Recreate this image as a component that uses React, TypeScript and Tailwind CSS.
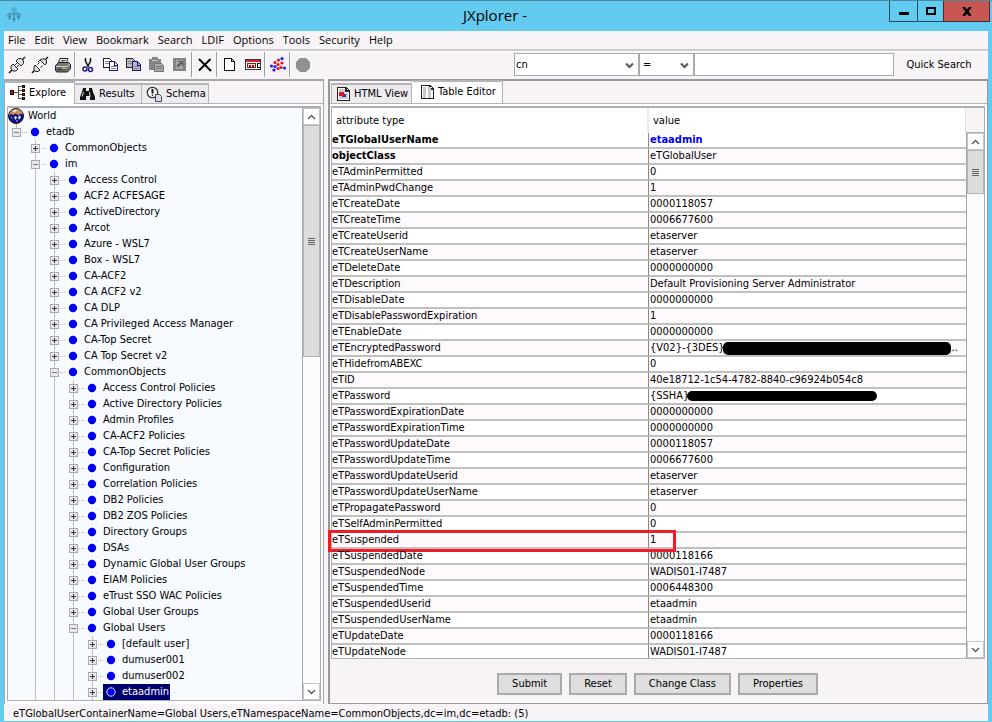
import { ReactNode, useState } from "react";
import clsx from "clsx";

type TreeNode = [depth: number, label: string, open?: boolean];

const tree: TreeNode[] = [
  [0, "etadb", true],
  [1, "CommonObjects"],
  [1, "im", true],
  [2, "Access Control"],
  [2, "ACF2 ACFESAGE"],
  [2, "ActiveDirectory"],
  [2, "Arcot"],
  [2, "Azure - WSL7"],
  [2, "Box - WSL7"],
  [2, "CA-ACF2"],
  [2, "CA ACF2 v2"],
  [2, "CA DLP"],
  [2, "CA Privileged Access Manager"],
  [2, "CA-Top Secret"],
  [2, "CA Top Secret v2"],
  [2, "CommonObjects", true],
  [3, "Access Control Policies"],
  [3, "Active Directory Policies"],
  [3, "Admin Profiles"],
  [3, "CA-ACF2 Policies"],
  [3, "CA-Top Secret Policies"],
  [3, "Configuration"],
  [3, "Correlation Policies"],
  [3, "DB2 Policies"],
  [3, "DB2 ZOS Policies"],
  [3, "Directory Groups"],
  [3, "DSAs"],
  [3, "Dynamic Global User Groups"],
  [3, "EIAM Policies"],
  [3, "eTrust SSO WAC Policies"],
  [3, "Global User Groups"],
  [3, "Global Users", true],
  [4, "[default user]"],
  [4, "dumuser001"],
  [4, "dumuser002"],
  [4, "etaadmin"],
];

const attributes: [string, string][] = [
  ["eTGlobalUserName", "etaadmin"],
  ["objectClass", "eTGlobalUser"],
  ["eTAdminPermitted", "0"],
  ["eTAdminPwdChange", "1"],
  ["eTCreateDate", "0000118057"],
  ["eTCreateTime", "0006677600"],
  ["eTCreateUserid", "etaserver"],
  ["eTCreateUserName", "etaserver"],
  ["eTDeleteDate", "0000000000"],
  ["eTDescription", "Default Provisioning Server Administrator"],
  ["eTDisableDate", "0000000000"],
  ["eTDisablePasswordExpiration", "1"],
  ["eTEnableDate", "0000000000"],
  ["eTEncryptedPassword", "{V02}-{3DES}"],
  ["eTHidefromABEXC", "0"],
  ["eTID", "40e18712-1c54-4782-8840-c96924b054c8"],
  ["eTPassword", "{SSHA}"],
  ["eTPasswordExpirationDate", "0000000000"],
  ["eTPasswordExpirationTime", "0000000000"],
  ["eTPasswordUpdateDate", "0000118057"],
  ["eTPasswordUpdateTime", "0006677600"],
  ["eTPasswordUpdateUserid", "etaserver"],
  ["eTPasswordUpdateUserName", "etaserver"],
  ["eTPropagatePassword", "0"],
  ["eTSelfAdminPermitted", "0"],
  ["eTSuspended", "1"],
  ["eTSuspendedDate", "0000118166"],
  ["eTSuspendedNode", "WADIS01-I7487"],
  ["eTSuspendedTime", "0006448300"],
  ["eTSuspendedUserid", "etaadmin"],
  ["eTSuspendedUserName", "etaadmin"],
  ["eTUpdateDate", "0000118166"],
  ["eTUpdateNode", "WADIS01-I7487"],
];

const menus = ["File", "Edit", "View", "Bookmark", "Search", "LDIF", "Options", "Tools", "Security", "Help"];

function Plug({ apart }: { apart?: boolean }) {
  return (
    <svg width="18" height="18" viewBox="0 0 18 18" fill="none" stroke="#222">
      <path d="M1 17l4-4M13 5l4-4" strokeWidth="1.6" />
      {apart ? (
        <>
          <path d="M4 9l5 5-2 1.500H4.500L3 13.500V11zM6.500 8.500l2-2M9.500 11.500l2-2" fill="#ddd" />
          <path d="M9 4l5 5 1.500-2V4.500L13.500 3H11zM7 6l2-2" fill="#ddd" />
        </>
      ) : (
        <>
          <path d="M5 8l5 5-2 2H5l-2-2v-3zM8 5l5 5 2.500-2.500V5L13 2.500h-2.500z" fill="#ddd" />
          <path d="M6.500 9.500l3-3M8.500 11.500l3-3" />
        </>
      )}
    </svg>
  );
}

function Printer() {
  return (
    <svg width="18" height="18" viewBox="0 0 18 18">
      <path d="M6 2.500h8l-2 5H4z" fill="#eee" stroke="#222" />
      <path d="M7.500 4.500h4M6.500 6h4" stroke="#555" />
      <path d="M1.500 9.500l3-3h10l2 2v4l-3 3.500h-11l-1-2z" fill="#777" stroke="#222" />
      <path d="M2 10.500h11l3-2" stroke="#ccc" fill="none" />
      <path d="M3 13.500h9" stroke="#444" strokeWidth="2" />
      <path d="M8 12.500h4" stroke="#c8c020" strokeWidth="1.500" />
    </svg>
  );
}

function Scissors() {
  return (
    <svg width="14" height="16" viewBox="0 0 14 16" fill="none">
      <path d="M4.500 1v3l3 6M9.500 1v3l-3 6" stroke="#111" strokeWidth="1.500" />
      <circle cx="4" cy="12" r="2" stroke="#17178a" strokeWidth="1.400" />
      <circle cx="9.500" cy="12.500" r="2" stroke="#17178a" strokeWidth="1.400" />
    </svg>
  );
}

function Copy({ filled }: { filled?: boolean }) {
  return (
    <svg width="17" height="16" viewBox="0 0 17 16" shapeRendering="crispEdges">
      <path d="M1.500 1.500h6l2 2v7h-8z" fill={filled ? "#bbb" : "#fff"} stroke="#222" />
      <path d="M3 4.500h4M3 6.500h4" stroke="#888" />
      <path d="M7.500 4.500h5l3 3v6h-8z" fill={filled ? "#bbb" : "#fff"} stroke="#17178a" />
      <path d="M12.500 5v3h3" fill="none" stroke="#17178a" />
      <path d="M9 9.500h5M9 11.500h5" stroke="#888" />
    </svg>
  );
}

function Paste() {
  return (
    <svg width="17" height="17" viewBox="0 0 17 17" shapeRendering="crispEdges">
      <path d="M1 3h3V1h6v2h3v11H1z" fill="#858585" />
      <path d="M4 4.500h6" stroke="#c4c4c4" />
      <path d="M6.500 7.500h7l2 2v6h-9z" fill="#a8a8a8" stroke="#777" />
      <path d="M8 10.500h6M8 12.500h6" stroke="#777" />
    </svg>
  );
}

function PasteAlias() {
  return (
    <svg width="15" height="15" viewBox="0 0 15 15" shapeRendering="crispEdges">
      <path d="M1 1h13v13H1z" fill="#848484" />
      <path d="M4 3h7v9H4z" fill="#a6a6a6" />
      <path d="M5 10l4-4M6 4.500h4.500V9" stroke="#5c5c5c" fill="none" strokeWidth="1.500" />
    </svg>
  );
}

function Rename() {
  return (
    <svg width="18" height="14" viewBox="0 0 18 14" shapeRendering="crispEdges">
      <path d="M1.500 1.500h15v10h-15z" fill="#fff" stroke="#333" />
      <path d="M2 3h14" stroke="#d22" strokeWidth="2" />
      <path d="M3.500 5.500h8v4h-8z" fill="#f6e4e4" stroke="#722" />
      <path d="M5 7.500h2M8 7.500h2" stroke="#b00" strokeWidth="2" />
      <path d="M13.500 5v5M12.500 5.500h3M12.500 9.500h3" stroke="#111" />
    </svg>
  );
}

function Refresh() {
  return (
    <svg width="18" height="17" viewBox="0 0 18 17">
      <g fill="#f01020">
        <circle cx="6" cy="6.500" r="1.600" /><circle cx="9.500" cy="4" r="1.600" /><circle cx="9" cy="8.500" r="1.600" />
        <circle cx="12" cy="11.500" r="1.600" /><circle cx="9" cy="12.500" r="1.600" /><circle cx="13" cy="7" r="1.600" />
      </g>
      <g fill="#1a20ff">
        <circle cx="13" cy="2.700" r="1.600" /><circle cx="2.500" cy="10" r="1.600" /><circle cx="5" cy="14" r="1.600" />
        <circle cx="6" cy="10.500" r="1.600" /><circle cx="15.500" cy="12" r="1.600" />
      </g>
    </svg>
  );
}

function ToolButton({ label, children }: { label: string; children: ReactNode }) {
  return (
    <button type="button" aria-label={label} className="flex h-6 w-[23px] items-center justify-center">
      {children}
    </button>
  );
}

function Separator() {
  return <span className="h-[25px] w-[2px] border-l border-[#9c9c9f] bg-white" />;
}

function ChevronIcon() {
  return (
    <svg className="pointer-events-none absolute right-[5px] top-[9px]" width="9" height="7" viewBox="0 0 9 7">
      <path d="M1 1.500l3.500 3.500L8 1.500" fill="none" stroke="#555" strokeWidth="2" />
    </svg>
  );
}

function Toolbar() {
  return (
    <div className="flex h-7 items-center border-t border-white pb-[2px] pl-px">
      <ToolButton label="Connect"><Plug /></ToolButton>
      <ToolButton label="Disconnect"><Plug apart /></ToolButton>
      <ToolButton label="Print"><Printer /></ToolButton>
      <Separator />
      <ToolButton label="Cut"><Scissors /></ToolButton>
      <ToolButton label="Copy"><Copy /></ToolButton>
      <ToolButton label="Copy DN"><Copy filled /></ToolButton>
      <ToolButton label="Paste"><Paste /></ToolButton>
      <ToolButton label="Paste alias"><PasteAlias /></ToolButton>
      <Separator />
      <ToolButton label="Delete">
        <svg width="14" height="14" viewBox="0 0 14 14" stroke="#000" strokeWidth="2">
          <path d="M1 1l12 12M12.500 1L1 12.500" />
        </svg>
      </ToolButton>
      <Separator />
      <ToolButton label="New">
        <svg width="13" height="15" viewBox="0 0 13 15" shapeRendering="crispEdges" fill="#fff" stroke="#111">
          <path d="M1.500 1.500h7l3 3v9h-10zM8.500 1.500v3h3" />
        </svg>
      </ToolButton>
      <ToolButton label="Rename"><Rename /></ToolButton>
      <Separator />
      <ToolButton label="Refresh"><Refresh /></ToolButton>
      <Separator />
      <ToolButton label="Stop">
        <svg width="14" height="14" viewBox="0 0 14 14" fill="#909090">
          <path d="M4 0h6l4 4v6l-4 4H4l-4-4V4z" />
        </svg>
      </ToolButton>
      <div className="ml-auto flex items-center">
        <div className="relative">
          <select aria-label="Search attribute" className="h-[23px] w-[125px] appearance-none border border-[#a9a9b2] bg-white pl-px outline-none">
            <option>cn</option>
          </select>
          <ChevronIcon />
        </div>
        <div className="relative">
          <select aria-label="Search operator" className="h-[23px] w-[55px] appearance-none border border-[#a9a9b2] bg-white pl-[3px] outline-none">
            <option>=</option>
          </select>
          <ChevronIcon />
        </div>
        <input aria-label="Search value" className="h-[23px] w-[200px] border border-[#a9a9b2] bg-white px-1 outline-none" />
        <button type="button" className="w-[94px] pr-1">Quick Search</button>
      </div>
    </div>
  );
}

interface TabProps {
  active: boolean;
  onClick: () => void;
  icon: ReactNode;
  className?: string;
  children: ReactNode;
}

function Tab({ active, onClick, icon, className, children }: TabProps) {
  return (
    <button
      type="button"
      role="tab"
      aria-selected={active}
      onClick={onClick}
      className={clsx(
        "flex items-center gap-[3px] whitespace-nowrap border-r border-t-2 border-[#b4b4b8] pl-1",
        active ? "h-[23px] bg-white pb-[2px]" : "h-[20px] bg-[#eeebee]",
        className,
      )}
    >
      {icon}
      {children}
    </button>
  );
}

function ExploreIcon() {
  return (
    <svg width="17" height="16" viewBox="0 0 17 16" shapeRendering="crispEdges">
      <path d="M5 7.500h4M9.500 1v13M9 1.500h5M9 5.500h5M9 9.500h5M9 13.500h5" stroke="#555" fill="none" />
      <path d="M1 5h4v5H1zM13 0h3v3h-3zM13 4h3v3h-3zM13 8h3v3h-3zM13 12h3v3h-3z" fill="#111" />
      <path d="M2 6h2v3H2zM14 1h1v1h-1zM14 5h1v1h-1zM14 9h1v1h-1zM14 13h1v1h-1z" fill="#e00" />
    </svg>
  );
}

function BinocularsIcon() {
  return (
    <svg width="17" height="14" viewBox="0 0 17 14">
      <path d="M4 1h3v3h3V1h3l1 4 2 5v3h-5V9H7v4H1v-3l2-5z" fill="#111" />
      <path d="M4.500 5L3 9.500M10.500 5l.500 5" stroke="#ddd" />
    </svg>
  );
}

function SchemaIcon() {
  return (
    <svg width="17" height="17" viewBox="0 0 17 17" fill="none">
      <circle cx="6.500" cy="6.500" r="5.200" fill="#fff" stroke="#333" strokeWidth="1.300" />
      <path d="M6.500 3v4.500" stroke="#111" strokeWidth="2" />
      <path d="M6.500 8.500v1.500M10 10l4 5" stroke="#333" strokeWidth="1.500" />
      <path d="M9.500 8.500h4l2 2v5h-6z" fill="#dde" stroke="#445" />
    </svg>
  );
}

function PageIcon({ html }: { html?: boolean }) {
  return (
    <svg width="15" height="16" viewBox="0 0 15 16" shapeRendering="crispEdges">
      <path d="M1.500 1.500h9l3 3v10h-12z" fill="#fff" stroke="#222" />
      <path d="M10 1v4h4" fill="none" stroke="#222" strokeWidth="2" />
      {html ? (
        <>
          <path d="M3 3h6v10H3zM9 7h3v6H9z" fill="#ccc" />
          <path d="M6 8h4v3H6z" fill="#2233dd" />
          <path d="M3 6h5v4H3z" fill="#dd1122" />
        </>
      ) : (
        <path d="M3 3h3v11H3zM8 3h3v11H8z" fill="#c9c9c9" />
      )}
    </svg>
  );
}

function Arrow({ up }: { up?: boolean }) {
  return (
    <svg width="9" height="6" viewBox="0 0 9 6" fill="none" stroke="#555">
      <path d={up ? "M1 5l3.500-3.500L8 5" : "M1 1l3.500 3.500L8 1"} strokeWidth="1.300" />
    </svg>
  );
}

function ScrollBar({ thumb }: { thumb: string }) {
  return (
    <div className="flex w-[18px] shrink-0 flex-col border-l border-[#a6a6aa] bg-[#fcfcfc]">
      <button type="button" aria-label="Scroll up" className="flex h-[17px] shrink-0 items-center justify-center border border-[#c6c6c9] bg-white">
        <Arrow up />
      </button>
      <div className={clsx("flex flex-col items-center justify-center gap-px border border-[#b4b4b6] bg-[#dcdcdc]", thumb)}>
        <span className="h-px w-[7px] bg-[#666]" />
        <span className="h-px w-[7px] bg-[#666]" />
        <span className="h-px w-[7px] bg-[#666]" />
        <span className="h-px w-[7px] bg-[#666]" />
      </div>
      <button type="button" aria-label="Scroll down" className="mt-auto flex h-[17px] shrink-0 items-center justify-center border border-[#c6c6c9] bg-white">
        <Arrow />
      </button>
    </div>
  );
}

function Globe() {
  return (
    <svg width="16" height="16" viewBox="0 0 16 16">
      <circle cx="8" cy="8" r="7.500" fill="#10107a" stroke="#1a1030" />
      <path d="M1 7C2 3 5 .800 8.500 1c3 0 5.500 2 6.500 5l-3 0-1.500 1.500L8 5.500 5 7 3.500 6z" fill="#c98e56" />
      <path d="M4 3l3-1.500 2.500 1-3 2z" fill="#f3dcbc" />
      <path d="M6 9l2-1 1 1.500L7.500 12zM11 7.500l2 1-1.500 3-1.500-1zM8 12l2 1-1 1z" fill="#eef" />
      <path d="M3 8l1.500 3" stroke="#48c" />
    </svg>
  );
}

function TreeRow({ node, selected, onSelect }: { node: TreeNode; selected: boolean; onSelect: () => void }) {
  const [depth, label, open] = node;
  return (
    <li role="treeitem" aria-selected={selected} className="flex h-4">
      {Array.from({ length: depth }, (_, i) => (
        <span key={i} className="w-[19px] shrink-0 pl-2">
          {i > 0 && <span className="block h-full w-px bg-[#bdbdc2]" />}
        </span>
      ))}
      <svg width="19" height="16" viewBox="0 0 19 16" className="shrink-0" shapeRendering="crispEdges">
        <path d={depth === 0 ? "M8.500 0v4" : "M8.500 0v16"} stroke="#bdbdc2" />
        <path d="M4.500 4.500h8v8h-8z" fill="#ece9ee" stroke="#a9a9ad" />
        <path d={open ? "M6 8.500h5" : "M6 8.500h5M8.500 6v5"} stroke={open ? "#777" : "#333"} />
        <path d="M14 8.500h5" stroke="#bbb" strokeDasharray="1 1" />
      </svg>
      <button
        type="button"
        onClick={onSelect}
        className={clsx("flex items-center gap-[6px] pl-[3px] pr-px", selected && "bg-[#00006c] text-white")}
      >
        <svg width="10" height="10" viewBox="0 0 10 10">
          <circle cx="5" cy="5" r="4.200" fill="#0000fa" stroke={selected ? "#dde" : "none"} />
        </svg>
        <span className="whitespace-nowrap">{label}</span>
      </button>
    </li>
  );
}

function Explorer() {
  const [tab, setTab] = useState("explore");
  const [selected, setSelected] = useState(tree.length - 1);

  return (
    <section className="flex w-[320px] shrink-0 flex-col border-l border-r border-t-2 border-[#a6a6aa]">
      <div role="tablist" className="flex h-[23px] items-end">
        <Tab active={tab === "explore"} onClick={() => setTab("explore")} icon={<ExploreIcon />} className="w-[70px]">
          Explore
        </Tab>
        <div className="flex h-full flex-1 items-end border-b border-[#b4b4b8]">
          <Tab active={tab === "results"} onClick={() => setTab("results")} icon={<BinocularsIcon />} className="w-[67px]">
            Results
          </Tab>
          <Tab active={tab === "schema"} onClick={() => setTab("schema")} icon={<SchemaIcon />} className="w-[67px]">
            Schema
          </Tab>
        </div>
      </div>
      <div className="flex flex-1 bg-white px-[2px] pb-[3px] pt-[2px]">
        <div className="flex flex-1 border border-t-2 border-[#aeaeb8] bg-[#f7faff]">
          <ul role="tree" aria-label="Directory" className="flex-1">
            <li className="flex h-4 items-center gap-1">
              <Globe />
              World
            </li>
            {tree.map((node, i) => (
              <TreeRow key={i} node={node} selected={selected === i} onSelect={() => setSelected(i)} />
            ))}
          </ul>
          <ScrollBar thumb="h-[232px]" />
        </div>
      </div>
    </section>
  );
}

function Value({ name, value }: { name: string; value: string }) {
  if (name === "eTEncryptedPassword") {
    return (
      <>
        {value}
        <span className="-ml-[2px] h-[13px] w-[228px] rounded-[5px] bg-black" />
        <span className="pl-px">..</span>
      </>
    );
  }
  if (name === "eTPassword") {
    return (
      <>
        {value}
        <span className="-ml-[2px] h-[10px] w-[190px] rounded-[5px] bg-black" />
      </>
    );
  }
  return <>{value}</>;
}

function AttributeTable() {
  return (
    <table className="w-full table-fixed border-separate border-spacing-0 leading-3">
      <thead>
        <tr className="h-[25px]">
          <th className="border-r-2 border-[#ece8ec] bg-white p-0 pl-1 text-left font-normal">attribute type</th>
          <th className="border-r border-[#e4e0e4] bg-white p-0 pl-1 text-left font-normal">value</th>
        </tr>
      </thead>
      <tbody>
        {attributes.map(([name, value], i) => (
          <tr key={name} className={i % 2 ? "bg-[#fdf9fd]" : "bg-white"}>
            <td className={clsx("border-b-2 border-r border-b-[#c0c0c0] border-r-[#88888c] p-0", i < 2 && "font-bold")}>
              <div className="relative flex h-[14px] items-center">
                {name}
                {name === "eTSuspended" && (
                  <span className="absolute -left-[4px] -top-[3px] h-[22px] w-[calc(100%+32px)] border-[3px] border-[#ee1c25]" />
                )}
              </div>
            </td>
            <td className={clsx("border-b-2 border-[#c0c0c0] p-0", i === 0 && "font-bold text-[#0000ee]")}>
              <div className="flex h-[14px] items-center whitespace-nowrap pl-px">
                <Value name={name} value={value} />
              </div>
            </td>
          </tr>
        ))}
      </tbody>
    </table>
  );
}

function ActionButton({ children }: { children: ReactNode }) {
  return (
    <button type="button" className="h-[22px] border-2 border-[#a9a9ac] bg-[#dedede] px-[13px] text-black">
      {children}
    </button>
  );
}

function Editor() {
  const [tab, setTab] = useState("table");

  return (
    <section className="flex min-w-0 flex-1 flex-col border-b border-l-2 border-r border-t-2 border-[#98989c]">
      <div role="tablist" className="flex h-[23px] items-end border-b border-[#b4b4b8] pl-px">
        <Tab active={tab === "html"} onClick={() => setTab("html")} icon={<PageIcon html />} className="w-[81px] border-l">
          HTML View
        </Tab>
        <Tab active={tab === "table"} onClick={() => setTab("table")} icon={<PageIcon />} className="w-[91px] pl-2">
          Table Editor
        </Tab>
      </div>
      <div className="flex flex-1 flex-col bg-white pb-px pr-[2px] pt-[2px]">
        <div className="ml-px flex min-h-0 flex-1 basis-0 border border-t-2 border-[#aeaeb8] bg-[#f7f3f7]">
          <div className="flex-1 [contain:size] [clip-path:inset(0_0_0_-4px)]">
            <AttributeTable />
          </div>
          <div className="flex flex-col pt-6">
            <div className="flex flex-1 border-t border-[#b4b4b8]">
              <ScrollBar thumb="h-[44px]" />
            </div>
          </div>
        </div>
        <div className="flex h-[43px] items-center justify-center gap-[7px] bg-[#f7f3f7] pt-[6px]">
          <ActionButton>Submit</ActionButton>
          <ActionButton>Reset</ActionButton>
          <ActionButton>Change Class</ActionButton>
          <ActionButton>Properties</ActionButton>
        </div>
      </div>
    </section>
  );
}

function App() {
  return (
    <div className="flex min-h-screen flex-col border-t border-[#4c8aa3] bg-[#63cbf0] pb-[2px] font-['DejaVu_Sans_Condensed','DejaVu_Sans',sans-serif] text-[11px] leading-[14px] text-black">
      <header className="grid h-[30px] grid-cols-[1fr_auto_1fr] items-start pr-[2px]">
        <svg className="ml-[6px] mt-[6px]" width="16" height="16" viewBox="0 0 16 16" fill="none" stroke="#3d7f98">
          <path d="M8 .500l2 2-2 2-2-2zM8 4.500V15M5 5l3 3 3-3M3.500 6L1 8.500 3.500 11 6 8.500zM12.500 6L10 8.500l2.500 2.500L15 8.500z" />
          <path d="M3.500 6v7M12.500 6v7M6 13l2-2 2 2" />
        </svg>
        <h1 className="pt-1 font-['Open_Sans',sans-serif] text-[15px] leading-5">JXplorer -</h1>
        <div className="flex justify-end">
          <button type="button" aria-label="Minimize" className="flex h-[21px] w-7 items-center justify-center border-b border-l border-[#234c5c] pt-1">
            <span className="h-[3px] w-[10px] bg-black" />
          </button>
          <button type="button" aria-label="Maximize" className="flex h-[21px] w-[26px] items-center justify-center border-b border-l border-[#234c5c]">
            <span className="h-2 w-[10px] border-2 border-black" />
          </button>
          <button type="button" aria-label="Close" className="flex h-[21px] w-[47px] items-center justify-center border border-t-0 border-[#4a2a2c] bg-[#c75750]">
            <svg width="10" height="9" viewBox="0 0 10 9" stroke="#000" strokeWidth="2.600">
              <path d="M1.500 0l7 9M8.500 0l-7 9" />
            </svg>
          </button>
        </div>
      </header>
      <div className="mx-1 flex flex-1 flex-col bg-[#f7f3f7]">
        <nav className="flex h-5 items-center gap-[9px] border-b-2 border-[#cfcccf] pl-1 font-['Open_Sans',sans-serif]">
          {menus.map((menu) => (
            <button key={menu} type="button">{menu}</button>
          ))}
        </nav>
        <Toolbar />
        <main className="flex flex-1 gap-1">
          <Explorer />
          <Editor />
        </main>
        <footer className="flex h-[17px] items-center pl-[9px] pt-[2px]">
          eTGlobalUserContainerName=Global Users,eTNamespaceName=CommonObjects,dc=im,dc=etadb: (5)
        </footer>
      </div>
    </div>
  );
}

export default App;
